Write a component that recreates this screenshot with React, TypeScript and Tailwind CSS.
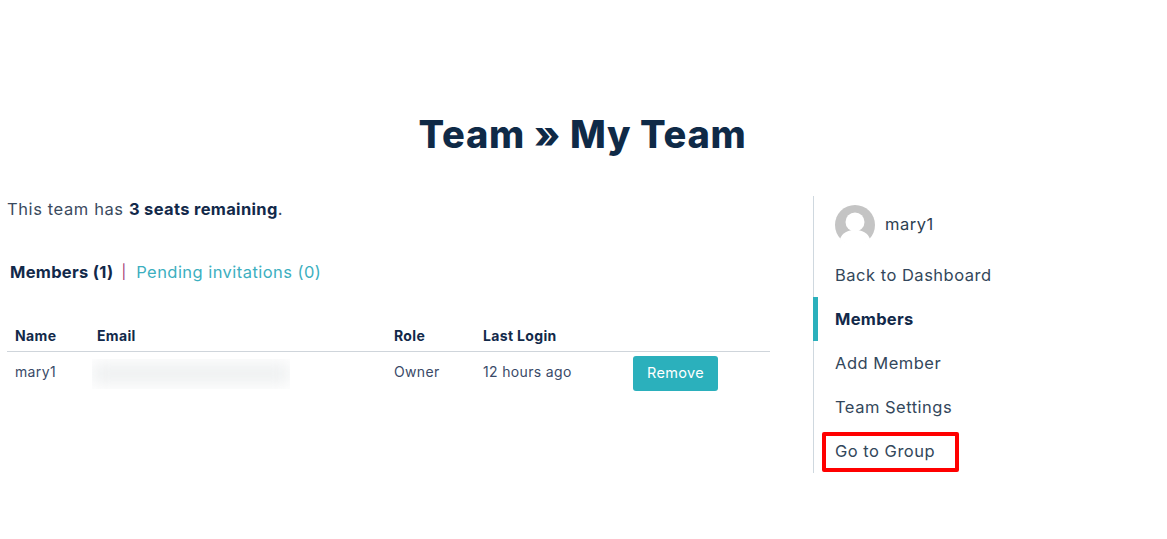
const navItems = ["Back to Dashboard", "Members", "Add Member", "Team Settings", "Go to Group"];

function Avatar() {
  return (
    <svg viewBox="0 0 40 40" className="w-10 h-10 shrink-0">
      <circle cx="20" cy="20" r="20" fill="#c4c4c4" />
      <circle cx="20" cy="17" r="9.5" fill="#fff" />
      <path d="M5 34c2-6 8-9 15-9s13 3 15 9a20 20 0 0 1-30 0z" fill="#fff" />
    </svg>
  );
}

export default function App() {
  return (
    <div className="h-[539px] w-[1167px] overflow-hidden bg-white text-[#12294a] font-['Inter','Liberation_Sans',sans-serif]">
      <h1 className="w-[1165px] pt-[111px] text-center text-[38px] leading-[46px] font-extrabold tracking-[0.7px] text-[#0f2a47]">
        Team » My Team
      </h1>
      <div className="flex pt-[39px] pl-[7px]">
        {/* main column */}
        <div className="w-[763px]">
          <p className="text-[16.5px] leading-[26px] tracking-[0.6px] text-[#3a4a5e]">
            This team has <strong className="font-bold tracking-[0.33px] text-[#12294a]">3 seats remaining</strong>.
          </p>
          <div className="mt-[37px] flex items-center pl-[3px] text-[16.5px] leading-[26px]">
            <span className="font-bold tracking-[0.3px] text-[#12294a]">Members (1)</span>
            <span className="ml-[8px] mr-[10px] text-[14px] text-[#9c2f72]">|</span>
            <a className="tracking-[0.45px] text-[#3cafc0]">Pending invitations (0)</a>
          </div>
          <div className="mt-[35px] flex h-[32px] items-center border-b border-[#cfd5db] pb-[1px] pl-[8px] text-[14px] font-bold tracking-[0.35px] text-[#12294a]">
            <span className="w-[82px]">Name</span>
            <span className="w-[297px]">Email</span>
            <span className="w-[89px]">Role</span>
            <span>Last Login</span>
          </div>
          <div className="flex h-[40px] items-center pb-[2px] pl-[8px] text-[14px] tracking-[0.35px] text-[#3a4a68]">
            <span className="w-[77px]">mary1</span>
            <div className="mr-[104px] mt-[6px] h-[30px] w-[198px] overflow-hidden">
              <div className="my-[4px] h-[21px] w-[198px] bg-[#eef0f1] blur-[8px]" />
            </div>
            <span className="w-[89px]">Owner</span>
            <span className="w-[150px]">12 hours ago</span>
            <button className="mt-[4px] h-[35px] w-[85px] rounded-[3px] bg-[#2bb0bc] text-[14.5px] text-white">Remove</button>
          </div>
        </div>
        {/* sidebar */}
        <div className="ml-[43px] w-[240px] border-l border-[#cfd8df]">
          <div className="flex items-center gap-[10px] pl-[21px] pt-[9px] text-[16.5px] tracking-[0.5px] text-[#2c3e50]">
            <Avatar />
            <span className="pb-[2px]">mary1</span>
          </div>
          <nav className="mt-[8px] flex flex-col text-[16.5px]">
            {navItems.map((item) => (
              <a
                key={item}
                className={`relative flex h-[44px] items-center pl-[21px] ${
                  item === "Members" ? "font-bold tracking-[0.3px] text-[#12294a]" : "tracking-[0.5px] text-[#33475b]"
                }`}
              >
                {item === "Members" && <span className="absolute -left-px top-0 h-full w-[5px] bg-[#2bb0bc]" />}
                {item}
                {item === "Go to Group" && (
                  <span className="absolute left-[8px] top-[3px] h-[40px] w-[137px] rounded-[2px] border-4 border-[#ff0000]" />
                )}
              </a>
            ))}
          </nav>
        </div>
      </div>
    </div>
  );
}
